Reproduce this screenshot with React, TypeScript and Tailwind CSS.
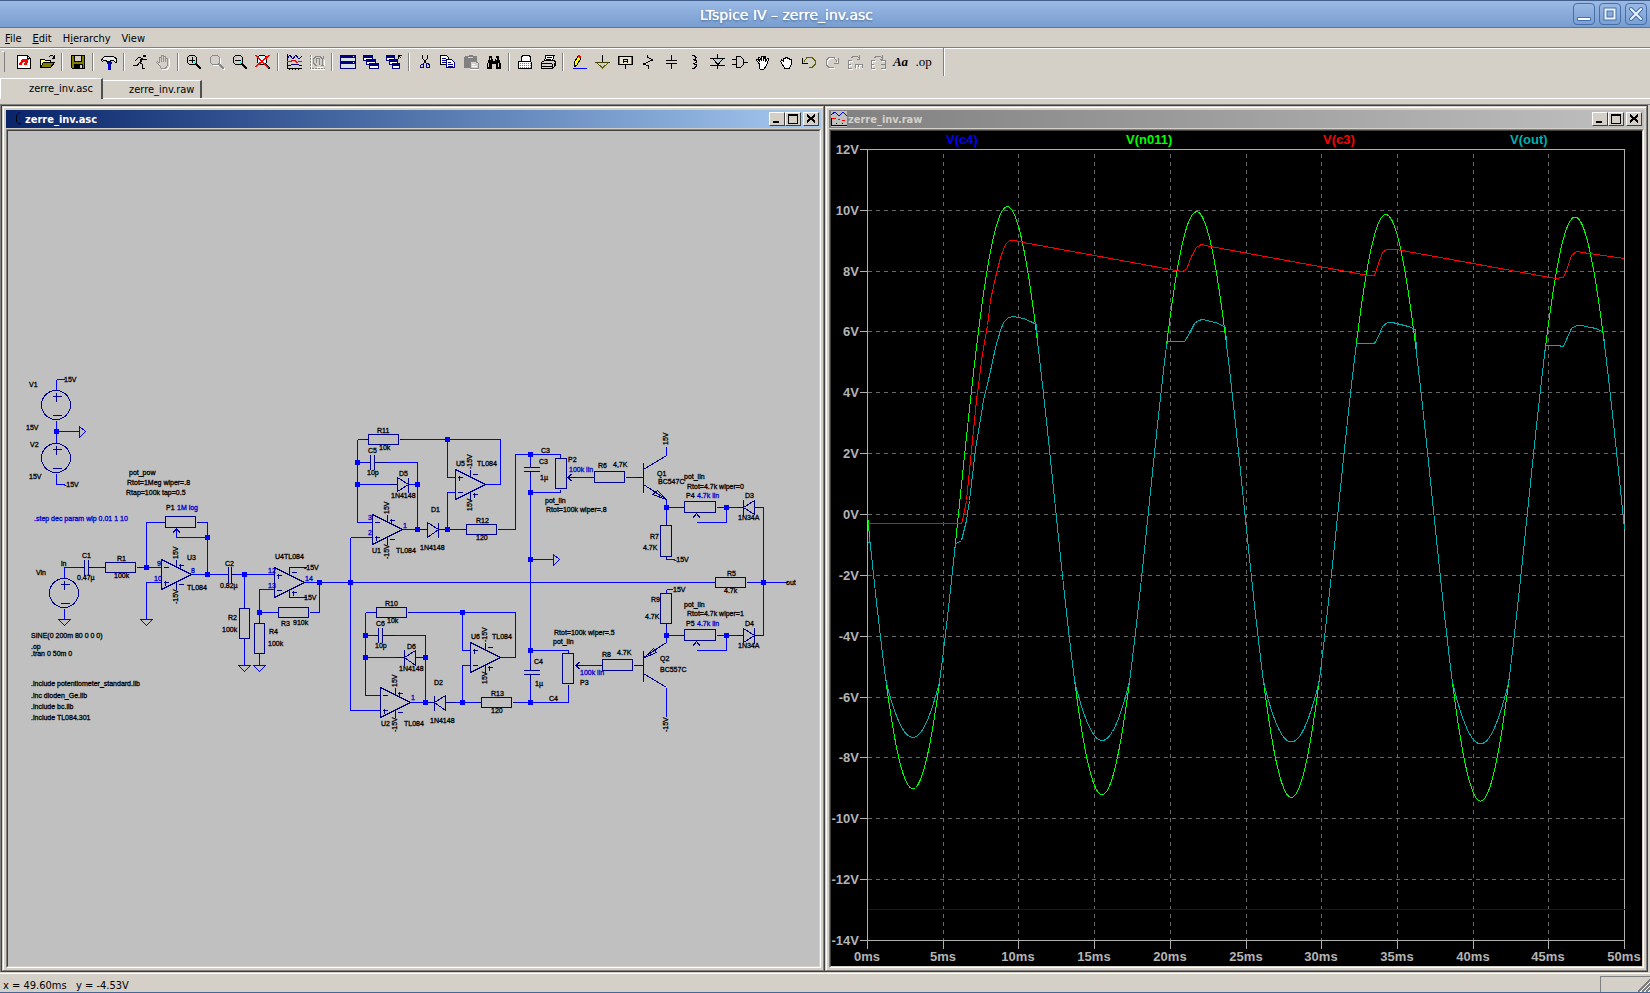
import React from "react";

type Point = [number, number];
type Label = [number, number, string];

/* ---------- toolbar icons, 16x16 each ---------- */

const ICONS: Record<string, React.ReactNode> = {
  new: (
    <>
      <path d="M1.5 1.5h10l3 3v10h-13z" fill="#fff" stroke="#000" />
      <path d="M11.5 1.5v3h3" fill="none" stroke="#000" />
      <path d="M6 5h7l-2 6h-3l1-3h-2l-1 3h-3l1-3h1z" fill="#f00" />
    </>
  ),
  open: (
    <>
      <path d="M1.5 13.5v-8h4l1 1h5v3" fill="#ff8" stroke="#000" />
      <path d="M1.5 13.5l3-5h11l-4 5z" fill="#808000" stroke="#000" />
      <path d="M9.5 3.5l2-2h2l1.5 2M15.5 1v3.5h-3" fill="none" stroke="#000" />
    </>
  ),
  save: (
    <>
      <path d="M1.5 1.5h13v13h-12l-1-1z" fill="#808000" stroke="#000" />
      <path d="M4.5 1.5h7v6h-7z" fill="#d4d0c8" stroke="#000" />
      <path d="M4 10h9v4h-9z" fill="#000" />
      <path d="M10 11h2v3h-2z" fill="#d4d0c8" />
    </>
  ),
  hammer: (
    <>
      <path d="M.5 6.500l1-2 2-2h8l3 1 1 2v3h-1l-2-2h-3v1h-4v-1h-3l-1 1z" fill="#e8e8e8" stroke="#000" />
      <path d="M6 8h5v2h-1v6h-3v-6h-1z" fill="#00f" />
      <path d="M6 8.500h5M9.500 9v6" stroke="#000080" />
    </>
  ),
  run: (
    <>
      <path d="M11 1h3v2h-3z" fill="#000" />
      <path
        d="M5.500 3.500h3l1 1 2 1h3M9.500 4l-2 5M10.500 4l-2 5M7.500 8.500l3 2v4h2M7 9.500l-2 2h-4M5.500 4l-2 3"
        fill="none"
        stroke="#000"
      />
    </>
  ),
  stop: (
    <>
      <path d="M14.500 5v7l-2 3.500h-6" fill="none" stroke="#fff" />
      <path d="M4.500 9v-6h2v5M6.500 8v-7h2v7M8.500 8v-6h2v6M10.500 8v-4h2v7l-2 3.500h-4l-2-3-3-3 1-1 2 2" fill="none" stroke="#909090" />
    </>
  ),
  zoomIn: (
    <>
      <circle cx="6" cy="6" r="5" fill="#d4d0c8" stroke="#000" />
      <path d="M3 3h1v1h-1zM8 8h1v1h-1zM8 3h1v1h-1z" fill="#0ff" />
      <path d="M6.500 3v6M3 6.500h6" stroke="#000" />
      <path d="M10 10l5 5" stroke="#000" strokeWidth="2" />
    </>
  ),
  pan: (
    <>
      <circle cx="7" cy="7" r="5" fill="#d4d0c8" stroke="#fff" />
      <circle cx="6" cy="6" r="5" fill="#d4d0c8" stroke="#888" />
      <path d="M11 11l5 5" stroke="#fff" strokeWidth="2" />
      <path d="M10 10l5 5" stroke="#888" strokeWidth="2" />
    </>
  ),
  zoomOut: (
    <>
      <circle cx="6" cy="6" r="5" fill="#d4d0c8" stroke="#000" />
      <path d="M3 3h2v1h-2zM8 8h1v1h-1z" fill="#0ff" />
      <path d="M3 6.500h6" stroke="#000" />
      <path d="M10 10l5 5" stroke="#000" strokeWidth="2" />
    </>
  ),
  zoomFit: (
    <>
      <circle cx="7" cy="6" r="5" fill="#cff" stroke="#000" />
      <path d="M10 10l5 5" stroke="#000" strokeWidth="2" />
      <path d="M1 1l13 13M15 1l-14 12" stroke="#f00" />
      <path d="M0 1l13 13M14 1l-14 12" stroke="#f00" />
    </>
  ),
  autorange: (
    <>
      <path d="M1.5 0v14.5h14" fill="none" stroke="#000" />
      <path d="M1 5l3-4 3 4 3-4 3 4 3-3M1 11h4l1-1h6l1 1h3" fill="none" stroke="#000080" />
      <path d="M1 7.5h4l1-1h3l2 2 2-1h3" fill="none" stroke="#f00" />
      <path d="M3.5 15v1M6.5 15v1M9.5 15v1M12.5 15v1" stroke="#000" />
    </>
  ),
  fft: (
    <>
      <path d="M2.5 1v14.5h14" fill="none" stroke="#fff" />
      <path d="M1.5 1v13.5h14" fill="none" stroke="#888" strokeDasharray="2 1" />
      <path d="M13.5 11v-6l-3-3h-3l-3 3v4l3 3M7.5 9v-4l2-1h1v7M14 2v3M12 11h3" fill="none" stroke="#888" />
      <path d="M15.5 12v-6M8 13h6" stroke="#fff" />
    </>
  ),
  tile: (
    <>
      <path d="M.5 1.5h15v13h-15z" fill="#d8e0e0" stroke="#000080" />
      <path d="M1 2h14v2h-14zM1 7h14v3h-14z" fill="#000080" />
      <path d="M13 2h1v1h-1zM13 8h1v1h-1z" fill="#fff" />
    </>
  ),
  cascade: (
    <>
      <path d="M.5 1.5h9v5h-9zM3.5 5.5h9v5h-9zM6.5 9.5h9v5h-9z" fill="#fff" stroke="#000080" />
      <path d="M1 2h9v2h-9zM4 6h9v2h-9zM7 10h9v2h-9z" fill="#000080" />
    </>
  ),
  closeAll: (
    <>
      <path d="M.5 1.5h8v5h-8zM3.5 5.5h8v5h-8zM6.5 9.5h7v5h-7z" fill="#fff" stroke="#000080" />
      <path d="M1 2h8v2h-8zM4 6h8v2h-8zM7 10h7v2h-7z" fill="#000080" />
      <path d="M12.5 4.5v-3h3M12.5 1.5l3 3" fill="none" stroke="#000" />
    </>
  ),
  cut: (
    <>
      <path d="M5.5 1v3l4 6M10.5 1v3l-4 6" fill="none" stroke="#000" />
      <path d="M4.5 10.5h2v3h-3v-2zM9.5 9.5h2l1 2v2h-3z" fill="none" stroke="#0000a0" />
    </>
  ),
  copy: (
    <>
      <path d="M.5 1.5h6l2 2v7h-8z" fill="#fff" stroke="#000" />
      <path d="M6.5 5.5h5l3 3v5h-8z" fill="#fff" stroke="#000080" />
      <path d="M2 4.5h4M2 6.5h4M2 8.5h4M8 8.5h3M8 10.5h5M8 12.5h5" stroke="#000080" />
    </>
  ),
  paste: (
    <>
      <path d="M1 3l1-1h3l1-1h3l1 1h3l1 1v11h-13z" fill="#808080" />
      <path d="M5 3.5h5" stroke="#d4d0c8" />
      <path d="M7.5 7.5h5l3 2v5h-8z" fill="#d4d0c8" stroke="#888" />
      <path d="M9 10.5h3M9 12.5h5M7 15.5h9" stroke="#fff" />
    </>
  ),
  find: (
    <>
      <path d="M3 2h3v3h1v2h2v-2h1v-3h3v3l2 5v5h-5v-5h-4v5h-5v-5l2-5z" fill="#000" />
      <path d="M4.5 4v2M2.5 9v4M10.5 4v2M12.5 9v4" stroke="#d4d0c8" />
    </>
  ),
  preview: (
    <>
      <path d="M4.5 7v-4l2-2h5l2 2v4" fill="#fff" stroke="#000" />
      <path d="M1.5 7.5h12l1 1v6h-13z" fill="#fff" stroke="#000" />
      <path d="M3 9.5h11M3 11.5h11M3 13.5h11" stroke="#808080" strokeDasharray="1 1" />
    </>
  ),
  print: (
    <>
      <path d="M4.5 7l1.5-5.5h8l-1.5 5.5z" fill="#fff" stroke="#000" />
      <path d="M1.5 8.5l3-2h9l2 1v4l-3 3h-11z" fill="#d4d0c8" stroke="#000" />
      <path d="M7 3.5h5M6 5.5h5M1 9.5h11M1 12.5h11M12.5 10v5M14.5 9v4" stroke="#000" />
      <path d="M7 11.5h3" stroke="#ff0" />
    </>
  ),
  pencil: (
    <>
      <path d="M3 9l4-7 3 2-4 7-3 2z" fill="#ff0" stroke="#000" />
      <path d="M7 1h2l1 2-1 1-3-2z" fill="#f00" />
      <path d="M3 10v3h2z" fill="#000" />
      <path d="M2 14.5h14" stroke="#00f" />
    </>
  ),
  ground: (
    <>
      <path d="M8.5 1v7" stroke="#000" />
      <path d="M2.5 8.5h12l-6 5.5z" fill="#d4d0c8" stroke="#606000" />
      <path d="M1 8.5h15" stroke="#404000" />
    </>
  ),
  netLabel: (
    <>
      <path d="M1.5 2.5h14v8h-14z" fill="#e8e4d0" stroke="#000" />
      <path d="M2.5 3v7M14.5 3v7" stroke="#808000" />
      <path d="M6.5 9v-4h4v4M7 7.5h3M8.5 11v4" fill="none" stroke="#000" />
    </>
  ),
  resistor: <path d="M7.5 1v2l5 3-9 4 5 2v3" fill="none" stroke="#000" />,
  capacitor: <path d="M8.5 1v5M3 6.5h11M3 9.5h11M8.5 10v5" fill="none" stroke="#000" />,
  inductor: <path d="M6 1.5h2l2 2-1 2h-2M7 5.5l3 1v2l-2 1h-1M7 9.5l3 1v2l-2 2h-2" fill="none" stroke="#000" />,
  diode: (
    <>
      <path d="M3.5 4.5h11l-5.5 6z" fill="#c0d0d0" stroke="#000" />
      <path d="M8.5 0v4M1 4.5h15M1 11.5h15M8.5 11v4" stroke="#000" />
    </>
  ),
  gate: (
    <>
      <path d="M4.5 2.5h4l3 3v5l-3 3h-4z" fill="#d4d0c8" stroke="#000" />
      <path d="M0 5.5h4M0 10.5h4M12 8.5h4" stroke="#000" />
    </>
  ),
  move: (
    <path
      d="M4.5 10l-3.5-4 1-1 3 3-2-5h1.500l2 4v-5h1.500v5l2-5 1 1-1 5 3-4 1 1-3 7-2 3h-4z"
      fill="#fff"
      stroke="#000"
    />
  ),
  drag: <path d="M4.5 10.5l-2-3 1-1.500 2 1v-3h2v-1h2v1h2v1h2v5l-2 4h-5z" fill="#fff" stroke="#000" />,
  undo: (
    <>
      <path d="M3 7.5l3-4h5l3 3v4l-3 3h-3" fill="none" stroke="#606000" />
      <path d="M1.5 4v5h5" fill="none" stroke="#000" />
    </>
  ),
  redo: (
    <>
      <path d="M14 8.5l-3-4h-5l-3 3v4l3 3h5" fill="none" stroke="#fff" />
      <path d="M13 7.5l-3-4h-5l-3 3v4l3 3h5M14.5 4v5h-5" fill="none" stroke="#888" />
    </>
  ),
  rotate: (
    <>
      <path d="M6 7.5h-4v8h4M2 11.5h3M9.5 15v-4h6v4M12.5 11v4" fill="none" stroke="#fff" />
      <path d="M5 6.5h-4v8h4M1 10.5h3M8.5 14v-4h7v4M11.5 10v3M4 4l3-2h3l2 2M12.5 1v4h-3" fill="none" stroke="#888" />
    </>
  ),
  mirror: (
    <>
      <path d="M6 7.5h-4v8h4M2 11.5h3M12 7.5h4v8h-4" fill="none" stroke="#fff" />
      <path d="M5 6.5h-4v8h4M1 10.5h3M11 6.5h4v8h-4M11 10.5h4M4 4l3-2h3l2 2M12.5 1v4h-3" fill="none" stroke="#888" />
    </>
  ),
};

const TOOLBAR: string[][] = [
  ["new", "open"],
  ["save"],
  ["hammer"],
  ["run", "stop"],
  ["zoomIn", "pan", "zoomOut", "zoomFit"],
  ["autorange", "fft"],
  ["tile", "cascade", "closeAll"],
  ["cut", "copy", "paste", "find"],
  ["preview", "print"],
  [
    "pencil", "ground", "netLabel", "resistor", "capacitor", "inductor", "diode", "gate",
    "move", "drag", "undo", "redo", "rotate", "mirror", "text", "directive",
  ],
];

function ToolButton({ name }: { name: string }) {
  return (
    <button type="button" aria-label={name} className="flex h-[22px] w-[23px] items-center justify-center">
      {name === "text" ? (
        <span className="font-['Liberation_Serif',serif] text-[13px] leading-4 font-bold italic">Aa</span>
      ) : name === "directive" ? (
        <span className="font-['Liberation_Serif',serif] text-[13px] leading-4">.op</span>
      ) : (
        <svg width="16" height="16" viewBox="0 0 16 16" shapeRendering="crispEdges">
          {ICONS[name]}
        </svg>
      )}
    </button>
  );
}

function Toolbar() {
  return (
    <div className="flex h-[29px] items-center pb-1">
      <div className="ml-[2px] h-[21px] w-[3px] border-t border-r border-r-[#808080] border-t-white" />
      <div className="ml-[7px] flex items-center">
        {TOOLBAR.map((group, i) => (
          <React.Fragment key={i}>
            {i > 0 && (
              <div className="flex w-2 justify-center">
                <div className="h-[18px] w-[2px] border-l border-l-[#808080] bg-white" />
              </div>
            )}
            {group.map((name) => (
              <ToolButton key={name} name={name} />
            ))}
          </React.Fragment>
        ))}
      </div>
      <div className="ml-2 h-[28px] w-[2px] border-l border-l-[#808080] bg-white" />
    </div>
  );
}

/* ---------- schematic ---------- */

const WIRES = [
  // supplies
  "M56 379V390M56 379H64M56 420V443M56 431H79M56 473V484H64",
  // input stage
  "M64 578V567H80M64 608V619M92 567H105M136 567H161M146 567V522H160M200 522H207V574M207 537H176V528",
  "M161 582H146V619M192 574H224M235 574H274M244 574V606M244 640V665M274 589H259V621M259 655V665",
  "M259 612H275M312 612H319V582M304 582H712",
  // upper half
  "M350 537H372M350 537V710H380M357 439H364M357 439V522H372M402 439H500V484H485M447 439V477H455",
  "M357 462H366M386 462H417V529M357 484H388M408 484H417M402 529H420M447 529H462M447 529V492H455",
  "M500 529H515V454H560M530 454V462M530 476V662M530 492H560M530 559H553",
  // lower half
  "M365 612H372M365 612V695H380M410 612H515V657H500M462 612V650H470M470 665H462V702",
  "M365 635H374M394 635H425V702M365 657H404M410 702H428M454 702H477M516 702H568V688",
  "M530 650H568M530 680V702",
  // output stage
  "M574 477H590M628 477H636M666 455V446M666 499V520M666 507H680M720 507H736M726 507V522H696",
  "M760 507H763V635H760M666 559H674M666 589H672M666 589V592M749 582H787M666 626V642",
  "M666 635H680M720 635H736M726 635V650H696M582 665H598M636 665H640M666 687V716",
];

const PARTS = [
  // capacitors
  "M84 559V575M88 559V575M80 567H84M88 567H92",
  "M228 566V582M231 566V582M224 574H228M231 574H235",
  "M370 454V469M374 454V469M366 462H370M374 462H386",
  "M378 627V642M382 627V642M374 635H378M382 635H394",
  "M523 467H539M523 471H539M530 462V467M530 471V476",
  "M523 670H539M523 674H539M530 662V670M530 674V680",
  // diodes
  "M397 477V491L408 484ZM408 477V492M388 484H397",
  "M427 522V537L438 529ZM438 522V537M420 529H427M438 529H447",
  "M415 650V665L404 657ZM404 649V665M404 657H396M415 657H425",
  "M445 695V710L434 702ZM434 695V710M428 702H434M445 702H454",
  "M754 500V514L743 507ZM743 499V515M736 507H743M754 507H760",
  "M743 628V642L754 635ZM754 627V643M736 635H743M754 635H760",
  // transistors
  "M643 462V492M636 477H643M643 469L666 455M643 484L666 499M652 494L657 490L666 499Z",
  "M643 650V681M638 665H643M643 673L666 687M643 657L666 642M653 648L656 652L644 657Z",
  // wiper arrows
  "M172 533L176 528L180 533M692 518L696 513L700 518M692 646L696 641L700 646",
  "M572 473L567 477L572 481M567 477H574M580 661L575 665L580 669M575 665H582",
  // resistor leads
  "M136 567H141M102 567H105M160 522H165M196 522H200M364 439H368M399 439H402M372 612H376M407 612H410",
  "M275 612H278M309 612H312M244 605V608M244 638V641M259 620V623M259 653V656M712 582H715M746 582H749",
  "M462 529H466M497 529H500M477 702H481M512 702H516M590 477H594M625 477H628M598 665H602M633 665H636",
  "M680 507H684M716 507H720M680 635H684M716 635H720M666 520V525M666 556V559M666 592V593M666 623V626",
  "M560 454V458M560 489V492M568 650V653M568 684V688M289 574V567H306M289 590V597H306",
];

const BOXES: [number, number, number, number][] = [
  [105, 562, 30, 10], [165, 516, 30, 11], [239, 608, 10, 30], [254, 623, 10, 30], [278, 607, 30, 10],
  [368, 434, 30, 10], [466, 524, 30, 10], [376, 607, 30, 10], [481, 697, 30, 10], [555, 458, 11, 30],
  [562, 653, 11, 30], [594, 471, 30, 11], [602, 659, 30, 11], [660, 525, 11, 31], [660, 593, 11, 30],
  [684, 501, 31, 11], [684, 629, 31, 11], [715, 577, 30, 10],
];

const JUNCTIONS: Point[] = [
  [56, 431], [146, 567], [207, 537], [207, 574], [244, 574], [259, 612], [319, 582], [350, 582],
  [357, 462], [357, 484], [417, 484], [417, 529], [447, 439], [447, 529], [530, 454], [530, 492],
  [530, 559], [365, 635], [365, 657], [425, 657], [425, 702], [462, 612], [462, 702], [530, 650],
  [530, 702], [666, 507], [726, 507], [763, 582], [666, 635], [726, 635],
];

const GROUNDS: Point[] = [[64, 619], [146, 619], [244, 665], [259, 665]];

const SOURCES: Point[] = [[56, 405], [56, 458], [64, 593]];

const LABELS: Label[] = [
  [29, 387, "V1"], [64, 382, "15V"], [26, 430, "15V"], [30, 447, "V2"], [29, 479, "15V"], [64, 487, "-15V"],
  [129, 475, "pot_pow"], [127, 485, "Rtot=1Meg wiper=.8"], [126, 495, "Rtap=100k tap=0.5"], [166, 510, "P1"],
  [61, 566, "in"], [36, 575, "Vin"], [82, 558, "C1"], [77, 580, "0.47µ"], [117, 561, "R1"], [114, 578, "100k"],
  [187, 560, "U3"], [187, 590, "TL084"], [225, 566, "C2"], [220, 588, "0.82µ"], [275, 559, "U4"], [284, 559, "TL084"],
  [304, 570, "-15V"], [304, 600, "15V"], [228, 620, "R2"], [222, 632, "100k"], [281, 626, "R3"], [293, 625, "910k"],
  [269, 634, "R4"], [268, 646, "100k"], [31, 638, "SINE(0 200m 80 0 0 0)"], [31, 649, ".op"], [31, 656, ".tran 0 50m 0"],
  [31, 686, ".include potentiometer_standard.lib"], [31, 698, ".inc dioden_Ge.lib"], [31, 709, ".include bc.lib"],
  [31, 720, ".include TL084.301"],
  [377, 433, "R11"], [379, 450, "10k"], [368, 453, "C5"], [367, 475, "10p"], [399, 476, "D5"], [391, 498, "1N4148"],
  [456, 466, "U5"], [477, 466, "TL084"], [372, 553, "U1"], [396, 553, "TL084"], [420, 550, "1N4148"], [431, 512, "D1"],
  [476, 523, "R12"], [476, 540, "120"],
  [385, 606, "R10"], [387, 623, "10k"], [376, 626, "C6"], [375, 648, "10p"], [407, 649, "D6"], [399, 671, "1N4148"],
  [471, 639, "U6"], [492, 639, "TL084"], [381, 726, "U2"], [404, 726, "TL084"], [430, 723, "1N4148"], [434, 685, "D2"],
  [491, 696, "R13"], [491, 713, "120"],
  [541, 453, "C3"], [539, 464, "C3"], [540, 480, "1µ"], [568, 462, "P2"], [598, 468, "R6"], [613, 467, "4,7K"],
  [657, 476, "Q1"], [658, 484, "BC547C"], [684, 479, "pot_lin"], [687, 489, "Rtot=4.7k wiper=0"], [686, 498, "P4"],
  [745, 498, "D3"], [738, 520, "1N34A"], [650, 539, "R7"], [643, 550, "4.7K"], [674, 562, "-15V"],
  [545, 503, "pot_lin"], [546, 512, "Rtot=100k wiper=.8"], [727, 576, "R5"], [724, 593, "4.7k"], [786, 585, "out"],
  [554, 635, "Rtot=100k wiper=.5"], [553, 644, "pot_lin"], [580, 685, "P3"], [602, 657, "R8"], [617, 655, "4.7K"],
  [534, 664, "C4"], [535, 686, "1µ"], [549, 701, "C4"], [660, 661, "Q2"], [660, 672, "BC557C"],
  [651, 602, "R9"], [645, 619, "4.7K"], [673, 592, "15V"], [684, 607, "pot_lin"], [687, 616, "Rtot=4.7k wiper=1"],
  [686, 626, "P5"], [745, 626, "D4"], [738, 648, "1N34A"],
];

const BLUE_LABELS: Label[] = [
  [177, 510, "1M log"], [34, 521, ".step dec param wip 0.01 1 10"], [569, 472, "100k lin"], [580, 675, "100k lin"],
  [697, 498, "4.7k lin"], [697, 626, "4.7k lin"], [157, 566, "9"], [154, 581, "10"], [191, 573, "8"],
  [268, 573, "12"], [268, 588, "13"], [305, 581, "14"], [368, 520, "3"], [368, 535, "2"], [403, 528, "1"], [411, 700, "1"],
];

const VERTICAL_LABELS: Label[] = [
  [178, 559, "15V"], [178, 604, "-15V"], [389, 514, "15V"], [389, 559, "-15V"], [472, 469, "-15V"], [472, 511, "15V"],
  [397, 687, "15V"], [397, 732, "-15V"], [487, 642, "-15V"], [487, 684, "15V"], [668, 445, "15V"], [668, 732, "-15V"],
];

function OpAmp({ x, y, invTop, posTop, pins = true }: { x: number; y: number; invTop: boolean; posTop: boolean; pins?: boolean }) {
  const inv = invTop ? 8 : 23;
  const non = invTop ? 23 : 8;
  const pos = posTop ? 6 : 25;
  const neg = posTop ? 25 : 5;
  return (
    <g transform={`translate(${x} ${y})`}>
      <path d="M0 0V30L30 15Z" />
      <path d={`M2 ${inv}H7M2 ${non}H7M4 ${non - 2}V${non + 3}`} />
      <path d={`M17 ${pos}H22M19 ${pos - 2}V${pos + 3}M17 ${neg}H22`} />
      {pins && <path d="M15 0V7M15 23V30" />}
    </g>
  );
}

function Schematic() {
  return (
    <svg
      className="block h-full w-full bg-[#c0c0c0] font-['Liberation_Sans',Arial,sans-serif] text-[7px]"
      viewBox="8 131 811 835"
      preserveAspectRatio="xMinYMin meet"
      role="img"
      aria-label="Schematic"
    >
      <g transform="translate(.5 .5)" fill="none" shapeRendering="crispEdges">
        <g stroke="#0000ff">
          {WIRES.map((d) => (
            <path key={d} d={d} />
          ))}
          {GROUNDS.map(([x, y]) => (
            <path key={`${x}-${y}`} d={`M${x - 6} ${y}H${x + 6}L${x} ${y + 6}Z`} />
          ))}
          <path d="M79 426V437L85 431ZM553 554V565L559 559Z" />
        </g>
        <g stroke="#000090">
          {SOURCES.map(([x, y]) => (
            <g key={`${x}-${y}`}>
              <circle cx={x - 0.5} cy={y - 0.5} r="14.5" />
              <path d={`M${x - 4} ${y - 9}H${x + 5}M${x} ${y - 13}V${y - 4}M${x - 4} ${y + 10}H${x + 5}`} />
            </g>
          ))}
          {BOXES.map(([x, y, w, h]) => (
            <rect key={`${x}-${y}`} x={x} y={y} width={w} height={h} />
          ))}
          {PARTS.map((d) => (
            <path key={d} d={d} />
          ))}
          <OpAmp x={161} y={559} invTop posTop />
          <OpAmp x={274} y={567} invTop={false} posTop={false} pins={false} />
          <OpAmp x={372} y={514} invTop posTop />
          <OpAmp x={455} y={469} invTop={false} posTop={false} />
          <OpAmp x={380} y={687} invTop posTop />
          <OpAmp x={470} y={642} invTop={false} posTop={false} />
        </g>
        <g fill="#0000ff">
          {JUNCTIONS.map(([x, y]) => (
            <rect key={`${x}-${y}`} x={x - 2.5} y={y - 2.5} width="5" height="5" />
          ))}
        </g>
      </g>
      <g fill="#000" stroke="#000" strokeWidth=".3">
        {LABELS.map(([x, y, text]) => (
          <text key={`${x}-${y}`} x={x} y={y}>
            {text}
          </text>
        ))}
        {VERTICAL_LABELS.map(([x, y, text]) => (
          <text key={`${x}-${y}`} transform={`translate(${x} ${y}) rotate(-90)`}>
            {text}
          </text>
        ))}
      </g>
      <g fill="#0000d0" stroke="#0000d0" strokeWidth=".3">
        {BLUE_LABELS.map(([x, y, text]) => (
          <text key={`${x}-${y}`} x={x} y={y}>
            {text}
          </text>
        ))}
      </g>
    </svg>
  );
}

/* ---------- waveform plot ---------- */

const LEFT = 867;
const RIGHT = 1624;
const TOP = 149;
const BOTTOM = 940;
const ZERO = 514;

const toX = (ms: number) => LEFT + (ms * (RIGHT - LEFT)) / 50;
const toY = (volt: number) => ZERO - (volt * (BOTTOM - TOP)) / 26;

function interpolate(points: Point[], t: number) {
  if (t <= points[0][0]) return points[0][1];
  for (let i = 1; i < points.length; i++) {
    const [t0, v0] = points[i - 1];
    const [t1, v1] = points[i];
    if (t <= t1) return v0 + ((v1 - v0) * (t - t0)) / (t1 - t0);
  }
  return points[points.length - 1][1];
}

const UPPER: Point[] = [[9.25, 10.12], [21.75, 9.95], [34.25, 9.86], [46.75, 9.78]];
const LOWER: Point[] = [[2.97, -9.01], [15.48, -9.21], [28, -9.3], [40.5, -9.42]];

function inputVoltage(t: number) {
  const hi = interpolate(UPPER, t);
  const lo = interpolate(LOWER, t);
  return (hi + lo) / 2 + ((hi - lo) / 2) * Math.cos((2 * Math.PI * (t - 9.24)) / 12.5);
}

// plateaus of the clipped output, in plot coordinates
const PLATEAUS: Point[][] = [
  [[955, 543], [958, 542], [961, 540], [963, 532], [966, 520], [967, 513], [969, 500], [975, 449], [983, 400], [989, 375], [995, 347], [1000, 330], [1003, 322], [1008, 317], [1013, 316], [1023, 318], [1030, 321], [1036, 324]],
  [[1167, 341], [1184, 341], [1189, 333], [1194, 323], [1198, 320], [1202, 319], [1211, 321], [1218, 323], [1225, 327]],
  [[1356, 343], [1374, 343], [1378, 336], [1382, 326], [1387, 322], [1392, 322], [1400, 324], [1408, 326], [1415, 329]],
  [[1545, 345], [1557, 345], [1563, 346], [1567, 337], [1571, 328], [1576, 325], [1581, 325], [1590, 327], [1596, 328], [1603, 332]],
];

function buildTraces() {
  const green: string[] = [`${LEFT},${ZERO}`];
  const cyan: string[] = [`${LEFT},542`, `${LEFT + 2},542`];
  for (let x = LEFT + 2; x <= RIGHT; x++) {
    const v = inputVoltage(((x - LEFT) * 50) / (RIGHT - LEFT));
    green.push(`${x},${toY(v).toFixed(1)}`);
    const plateau = PLATEAUS.find((p) => x >= p[0][0] && x <= p[p.length - 1][0]);
    const out = v < -5.5 ? -5.5 + (v + 5.5) * 0.52 : v;
    cyan.push(`${x},${(plateau ? interpolate(plateau, x) : toY(out)).toFixed(1)}`);
  }
  return { green: green.join(" "), cyan: cyan.join(" ") };
}

const TRACES = buildTraces();

const RED =
  "867,523 961,523 962,520 966,500 971,450 976,400 982,353 987,325 990,300 995,277 1000,257 1005,244 1009,240 1014,240 " +
  "1023,242 1181,271 1186,269 1191,256 1196,247 1201,244 1210,246 1368,275 1374,275 1378,263 1382,252 1386,249 1396,249 " +
  "1555,278 1563,277 1567,267 1571,255 1576,251 1589,253 1624,258";

const VOLTS = [12, 10, 8, 6, 4, 2, 0, -2, -4, -6, -8, -10, -12, -14];
const TIMES = [0, 5, 10, 15, 20, 25, 30, 35, 40, 45, 50];

const LEGEND = [
  { name: "V(c4)", x: 946, color: "#0000ff" },
  { name: "V(n011)", x: 1126, color: "#00ff00" },
  { name: "V(c3)", x: 1323, color: "#ff0000" },
  { name: "V(out)", x: 1510, color: "#00b0b0" },
];

function Plot() {
  return (
    <svg
      className="block h-full w-full bg-black font-['Liberation_Sans',Arial,sans-serif] text-[13px] font-bold"
      viewBox="831 131 811 835"
      preserveAspectRatio="xMinYMin meet"
      role="img"
      aria-label="Waveforms"
    >
      <g transform="translate(.5 .5)" fill="none" shapeRendering="crispEdges">
        <g stroke="#686868" strokeDasharray="4 4">
          {VOLTS.slice(1, -1).map((v) => (
            <path key={v} d={`M${LEFT} ${Math.round(toY(v))}H${RIGHT}`} />
          ))}
          {TIMES.slice(1, -1).map((t) => (
            <path key={t} d={`M${Math.round(toX(t))} ${TOP + 4}V${BOTTOM}`} />
          ))}
        </g>
        <g stroke="#b0b0b0">
          <rect x={LEFT} y={TOP} width={RIGHT - LEFT} height={BOTTOM - TOP} />
          {VOLTS.map((v) => (
            <path key={v} d={`M${LEFT - 8} ${Math.round(toY(v))}H${LEFT}`} />
          ))}
          {TIMES.map((t) => (
            <path key={t} d={`M${Math.round(toX(t))} ${BOTTOM}V${BOTTOM + 8}`} />
          ))}
        </g>
        <path d={`M${LEFT} 909H${RIGHT}`} stroke="#0000e0" />
        <polyline points={TRACES.green} stroke="#00ff00" />
        <polyline points={RED} stroke="#ff0000" />
        <polyline points={TRACES.cyan} stroke="#00b0b0" />
      </g>
      <g fill="#b4b4b4">
        {VOLTS.map((v) => (
          <text key={v} x={LEFT - 8} y={Math.round(toY(v)) + 5} textAnchor="end">
            {v}V
          </text>
        ))}
        {TIMES.map((t) => (
          <text key={t} x={Math.round(toX(t))} y="961" textAnchor="middle">
            {t}ms
          </text>
        ))}
      </g>
      {LEGEND.map((item) => (
        <text key={item.name} x={item.x} y="144" fill={item.color}>
          {item.name}
        </text>
      ))}
    </svg>
  );
}

/* ---------- windows ---------- */

function WindowButton({ label, children }: { label: string; children: React.ReactNode }) {
  return (
    <button
      type="button"
      aria-label={label}
      className="h-[14px] w-4 border border-t-white border-r-[#404040] border-b-[#404040] border-l-white bg-[#d4d0c8]"
    >
      <svg width="14" height="12" viewBox="0 0 14 12" fill="none" stroke="#000" shapeRendering="crispEdges">
        {children}
      </svg>
    </button>
  );
}

function ChildWindow({ title, active, icon, children }: { title: string; active: boolean; icon: React.ReactNode; children: React.ReactNode }) {
  return (
    <section className="flex min-w-0 flex-1 flex-col border-r border-b border-[#404040]">
      <div className="flex min-h-0 flex-1 flex-col border border-t-[#d4d0c8] border-r-[#808080] border-b-[#808080] border-l-[#d4d0c8]">
        <div className="flex min-h-0 flex-1 flex-col border-t border-l border-white p-[2px]">
          <header
            className={`flex h-[18px] shrink-0 items-center px-[2px] text-[11px] font-bold ${
              active
                ? "bg-linear-to-r from-[#0a246a] to-[#a6caf0] text-white"
                : "bg-linear-to-r from-[#808080] to-[#c0c0c0] text-[#d4d0c8]"
            }`}
          >
            {icon}
            <h2 className="ml-px flex-1 pt-[2px] leading-4">{title}</h2>
            <WindowButton label="Minimize">
              <path d="M3 9h6" strokeWidth="2" />
            </WindowButton>
            <WindowButton label="Maximize">
              <path d="M2.5 1v9.5h9v-9.5" />
              <path d="M2 2h10" strokeWidth="2" />
            </WindowButton>
            <span className="w-[2px]" />
            <WindowButton label="Close">
              <path d="M3 2l8 7M11 2l-8 7" strokeWidth="2" />
            </WindowButton>
          </header>
          <div className="mt-px flex min-h-0 flex-1 border border-t-[#808080] border-r-white border-b-white border-l-[#808080]">
            <div className="min-h-0 min-w-0 flex-1 border border-t-[#404040] border-r-[#d4d0c8] border-b-[#d4d0c8] border-l-[#404040]">
              {children}
            </div>
          </div>
        </div>
      </div>
    </section>
  );
}

const SchematicIcon = () => (
  <svg width="16" height="16" viewBox="0 0 16 16" fill="none" stroke="#000" shapeRendering="crispEdges">
    <path d="M12 1l-4 4v5l4 4M10 12h3" />
  </svg>
);

const PlotIcon = () => (
  <svg width="16" height="16" viewBox="0 0 16 16" fill="none" shapeRendering="crispEdges">
    <path d="M0 0h16v16h-16z" fill="#c0c0c0" />
    <path d="M0 4l4-3 4 4 4-4 4 4" stroke="#00f" />
    <path d="M1 7.5h4M7 8.5h2M11 9.5h3" stroke="#f00" />
    <path d="M5 12.5h1M11 12.5h1" stroke="#00f" />
    <path d="M0 14.5h16M.5 7v8" stroke="#000" />
  </svg>
);

function FrameButton({ label, children }: { label: string; children: React.ReactNode }) {
  return (
    <button
      type="button"
      aria-label={label}
      className="flex size-[22px] items-center justify-center rounded border border-[#446fa8] bg-linear-to-b from-[#9ab8e4] to-[#7ba0d2]"
    >
      <svg width="16" height="16" viewBox="0 0 16 16" fill="none" stroke="#eef4ff">
        {children}
      </svg>
    </button>
  );
}

export default function App() {
  return (
    <div className="flex h-screen flex-col overflow-hidden border-b border-[#44679a] bg-[#d4d0c8] font-['DejaVu_Sans_Condensed','DejaVu_Sans',sans-serif] text-[11px] text-black">
      <header className="flex h-7 shrink-0 items-center border-t border-b border-t-[#42608c] border-b-[#5078b0] bg-linear-to-b from-[#9bbae6] to-[#789dcf] pr-[3px]">
        <h1 className="flex-1 pt-[2px] text-center font-['DejaVu_Sans',sans-serif] text-sm text-white [text-shadow:0_0_1px_#fff,0_1px_2px_#30588c]">
          LTspice IV – zerre_inv.asc
        </h1>
        <div className="flex gap-1">
          <FrameButton label="Minimize">
            <path d="M1.5 11.5h13v3h-13z" fill="#fff" stroke="#446fa8" />
          </FrameButton>
          <FrameButton label="Maximize">
            <path d="M3.5 3.5h9v9h-9z" stroke="#446fa8" strokeWidth="4" />
            <path d="M3.5 3.5h9v9h-9z" strokeWidth="2" />
          </FrameButton>
          <FrameButton label="Close">
            <path d="M3 3l10 10M13 3l-10 10" stroke="#446fa8" strokeWidth="4" strokeLinecap="round" />
            <path d="M3 3l10 10M13 3l-10 10" strokeWidth="2" strokeLinecap="round" />
          </FrameButton>
        </div>
      </header>

      <nav className="flex h-[20px] shrink-0 items-end gap-[11px] border-b border-[#808080] pl-[5px] leading-4">
        <button type="button"><u>F</u>ile</button>
        <button type="button"><u>E</u>dit</button>
        <button type="button">H<u>i</u>erarchy</button>
        <button type="button">View</button>
      </nav>
      <div className="shrink-0 border-t border-white">
        <Toolbar />
      </div>

      <div className="flex h-[21px] shrink-0 items-stretch">
        <button
          type="button"
          className="w-[103px] border-t border-r-2 border-l border-t-white border-r-[#505050] border-l-white pt-px pl-[28px] text-left"
        >
          zerre_inv.asc
        </button>
        <div className="flex flex-1 border-b border-white pt-[2px]">
          <button type="button" className="w-[99px] border-t border-r-2 border-t-white border-r-[#505050] pt-px pl-[26px] text-left">
            zerre_inv.raw
          </button>
        </div>
      </div>

      <div className="mt-[5px] flex min-h-0 flex-1 border-t border-l border-[#808080]">
        <main className="mr-[2px] flex min-h-0 flex-1 border-t border-l border-[#404040]">
          <ChildWindow title="zerre_inv.asc" active icon={<SchematicIcon />}>
            <Schematic />
          </ChildWindow>
          <ChildWindow title="zerre_inv.raw" active={false} icon={<PlotIcon />}>
            <Plot />
          </ChildWindow>
        </main>
      </div>

      <footer className="mt-px flex h-[19px] shrink-0 items-end justify-between border-t border-white">
        <p className="pl-[3px] leading-3 whitespace-pre">x = 49.60ms   y = -4.53V</p>
        <div className="flex h-4 w-[50px] justify-end border-t border-l border-[#808080]">
          <svg width="12" height="15" viewBox="0 0 12 15" fill="none" stroke="#808080" shapeRendering="crispEdges">
            <path d="M0 15L12 3M4 15L12 7M8 15L12 11" strokeWidth="2" />
            <path d="M2 15L12 5M6 15L12 9M10 15L12 13" stroke="#fff" />
          </svg>
        </div>
      </footer>
    </div>
  );
}
